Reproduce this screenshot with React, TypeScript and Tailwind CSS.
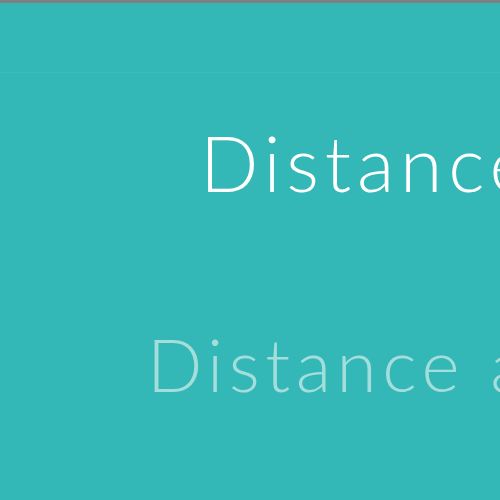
import React from 'react';

const App: React.FC = () => {
    return (
        <div className="w-[500px] h-[500px] overflow-hidden bg-[#33b7b7] flex flex-col" style={{ fontFamily: 'Lato, "Open Sans", sans-serif' }}>
            {/* top window edge */}
            <div className="h-[3px] bg-[#808080]" />
            <div className="h-[69px]" />
            <div className="h-px bg-[#3bbdbd]" />

            {/* headline */}
            <div className="pl-[200px] pt-[51px] whitespace-nowrap">
                <span className="text-[77px] leading-none font-light tracking-[0.075em] text-white">Distance</span>
            </div>

            {/* faded label */}
            <div className="pl-[147px] pt-[127px] whitespace-nowrap">
                <span className="text-[73px] leading-none font-light tracking-[0.075em] text-[#a3dedb]">Distance a</span>
            </div>
        </div>
    );
};

export default App;
